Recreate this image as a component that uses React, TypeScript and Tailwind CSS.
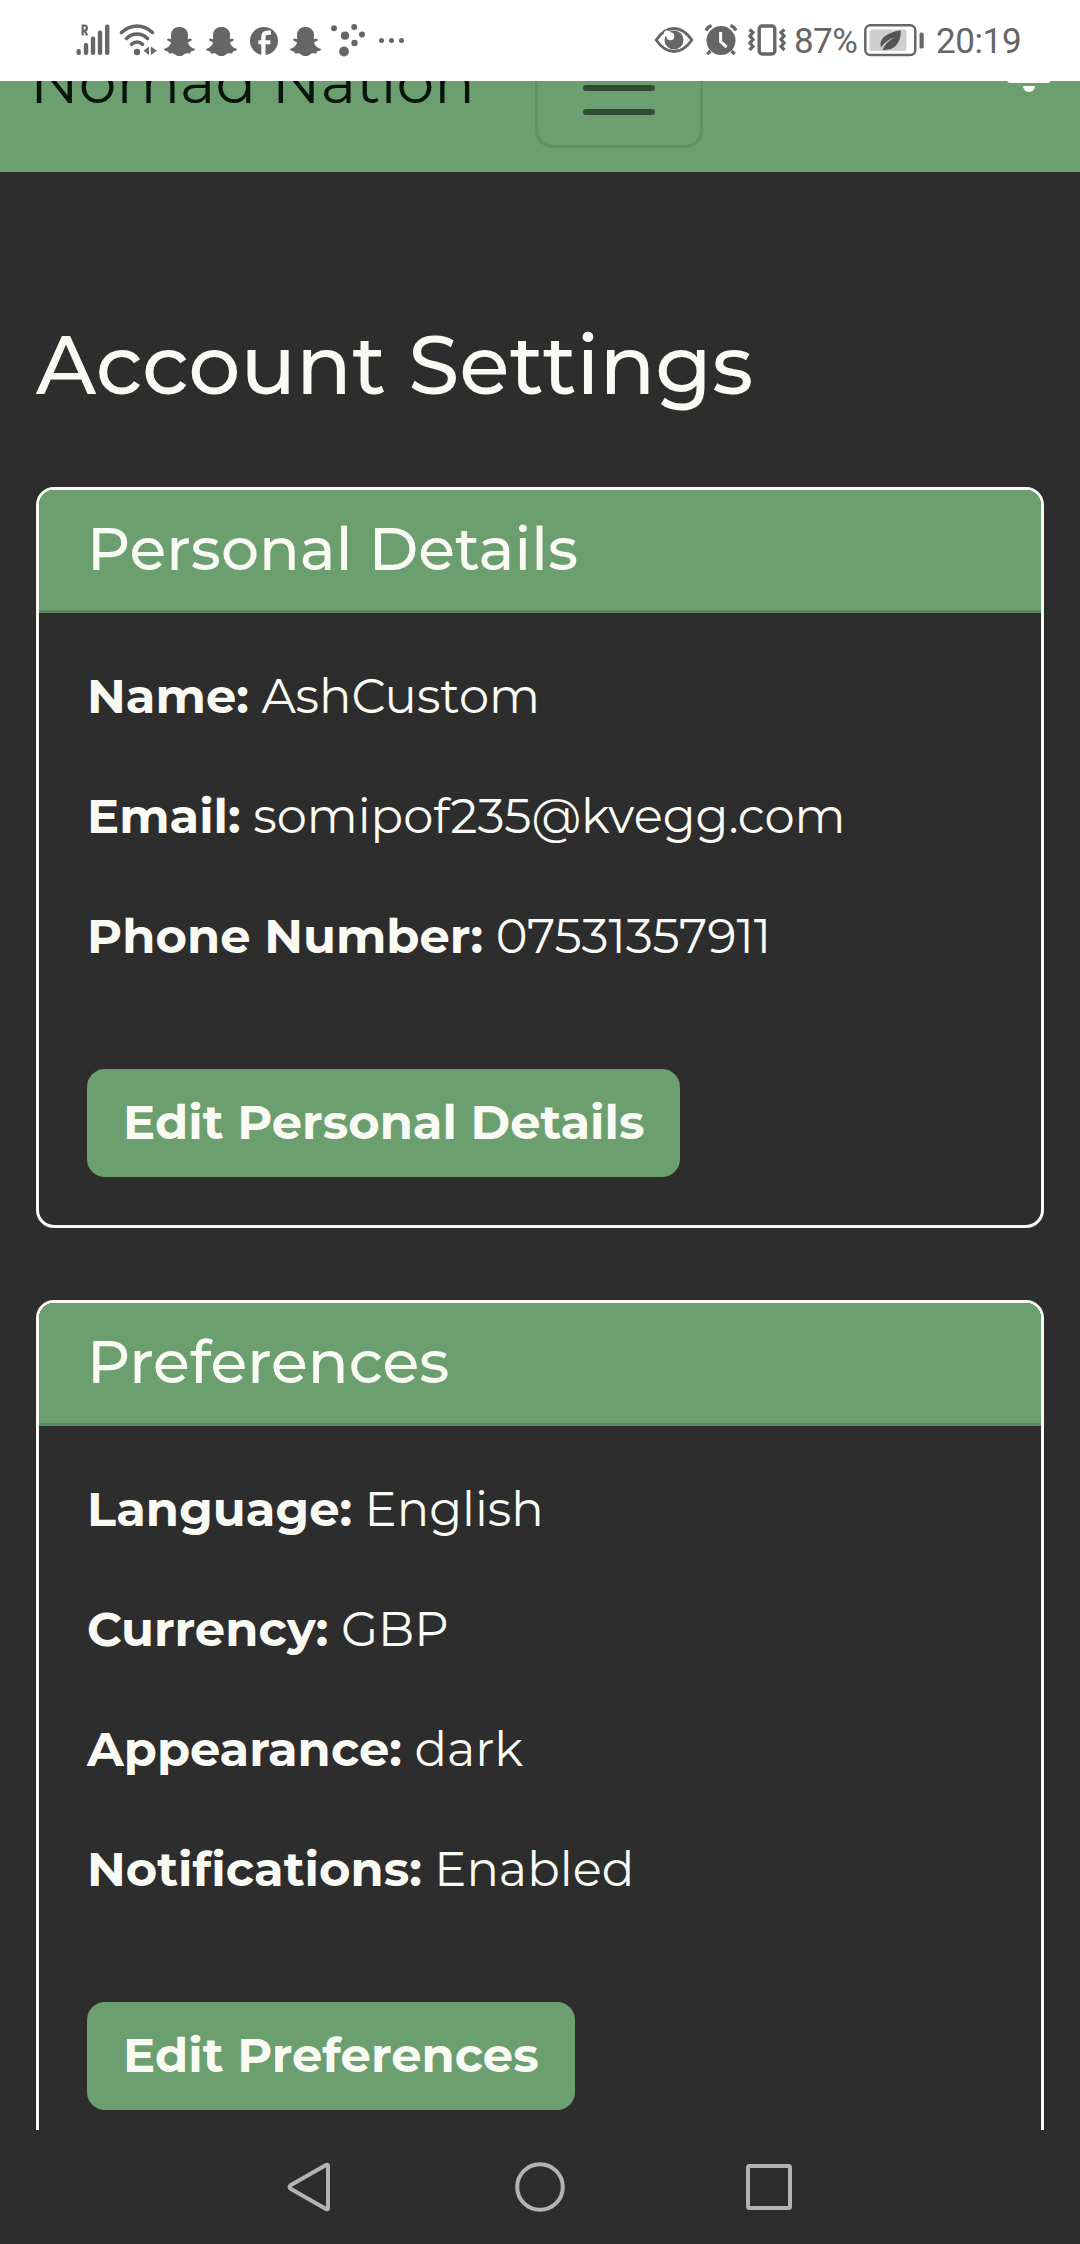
import type { ReactNode } from "react";
import { FaSnapchatGhost } from "react-icons/fa";

const GREY = "#666666";

function SignalIcon() {
  return (
    <svg className="h-[34px] w-[36px] shrink-0" viewBox="0 0 36 34" fill={GREY}>
      <rect x="0.5" y="26" width="4.4" height="6" rx="2" />
      <rect x="7.8" y="20" width="4.4" height="12" rx="2" />
      <rect x="14.8" y="13.5" width="4.4" height="18.5" rx="2" />
      <rect x="21.8" y="7.5" width="4.4" height="24.5" rx="2" />
      <rect x="29" y="1.5" width="4.4" height="30.5" rx="2" />
      <path d="M6.700 12.500V2.500h2q2.200 0 2.200 2.500t-2.200 2.500H6.800M8.600 7.500l2.500 5" fill="none" stroke={GREY} strokeWidth="2.200" />
    </svg>
  );
}

function WifiIcon() {
  return (
    <svg className="h-[34px] w-[40px] shrink-0" viewBox="0 0 40 34" fill="none" stroke={GREY} strokeWidth="3.6" strokeLinecap="round">
      <path d="M2.500 9.500Q9.500 3 18 3T33.500 9.500" />
      <path d="M7.500 15.500Q12 11 18 11T28.500 15.500" />
      <path d="M12.500 21.300Q15 19 18 19T23.500 21.300" />
      <circle cx="18" cy="29" r="3.2" fill={GREY} stroke="none" />
      <path d="M30 23.500v8.500l-5.500-4.300zM31.800 23.500v8.500l6.200-4.300z" fill={GREY} stroke="none" />
    </svg>
  );
}

function FacebookIcon() {
  return (
    <svg className="h-[28px] w-[28px] shrink-0" viewBox="0 0 28 28">
      <circle cx="14" cy="14" r="14" fill={GREY} />
      <path d="M13.400 28V10q0-4.300 4.600-4.300h3" fill="none" stroke="#fff" strokeWidth="4.200" />
      <path d="M8.300 15.300h12" stroke="#fff" strokeWidth="4" />
    </svg>
  );
}

function DotsIcon() {
  return (
    <svg className="h-[34px] w-[36px] shrink-0" viewBox="0 0 36 34" fill={GREY}>
      <circle cx="4" cy="5.200" r="3" />
      <circle cx="24.200" cy="4" r="3" />
      <circle cx="15" cy="12.700" r="4.100" />
      <circle cx="32" cy="11.500" r="3" />
      <circle cx="24.500" cy="20" r="3.200" />
      <circle cx="14" cy="28.500" r="4.900" />
    </svg>
  );
}

function EyeIcon() {
  return (
    <svg className="h-[30px] w-[40px] shrink-0" viewBox="0 0 40 30">
      <path d="M2.200 15Q10 3.500 20 3.500T37.800 15Q30 26.500 20 26.500T2.200 15Z" fill="none" stroke={GREY} strokeWidth="2.800" />
      <circle cx="20" cy="15" r="9.500" fill={GREY} />
      <circle cx="16.300" cy="11.200" r="4" fill="#fff" />
      <circle cx="13" cy="8.500" r="3" fill="#fff" />
    </svg>
  );
}

function AlarmIcon() {
  return (
    <svg className="h-[34px] w-[34px] shrink-0" viewBox="0 0 34 34" fill="none" stroke={GREY} strokeWidth="3.2">
      <circle cx="17" cy="17.500" r="14.500" fill={GREY} stroke="none" />
      <path d="M2 7.500q1.500-3.500 5.500-5M32 7.500q-1.500-3.500-5.500-5M6.500 28l-3.300 3.200M27.500 28l3.300 3.200" />
      <path d="M16.600 9v9.500l6 5.700" stroke="#fff" strokeWidth="3" />
    </svg>
  );
}

function VibrateIcon() {
  return (
    <svg className="h-[34px] w-[38px] shrink-0" viewBox="0 0 38 34" fill="none" stroke={GREY}>
      <rect x="11.200" y="3" width="15.600" height="28" rx="3" strokeWidth="3.400" />
      <path d="M1.500 6.500l3.500 3-3 3.500 3 3.500-3 3.500 3 3.500-3.500 3.500M36.500 6.500l-3.500 3 3 3.500-3 3.500 3 3.500-3 3.500 3.500 3.500" strokeWidth="3.200" />
    </svg>
  );
}

function BatteryIcon() {
  return (
    <svg className="h-[34px] w-[60px] shrink-0" viewBox="0 0 60 34">
      <rect x="1.300" y="2.300" width="50" height="29.800" rx="5" fill="none" stroke={GREY} strokeWidth="2.500" />
      <rect x="5.500" y="6.500" width="37" height="21.500" rx="2" fill="#cfcfcf" />
      <path d="M36.800 7.300Q26 9 20.500 13.500T17 24.500Q22 17 30.500 14.500 22 18.500 18.500 26.800 28 27.500 32.500 22T36.800 7.300Z" fill="#555" />
      <rect x="55.500" y="9.500" width="4.200" height="16" rx="1.500" fill={GREY} />
    </svg>
  );
}

function StatusBar() {
  return (
    <header className="flex h-[81px] shrink-0 items-start bg-white pt-[23px] font-['Roboto',sans-serif] text-[#666666]">
      <div className="ml-[76px] flex h-[34px] items-center">
        <SignalIcon />
        <div className="ml-[7px] flex"><WifiIcon /></div>
        <FaSnapchatGhost className="mt-[2px] ml-[5px] size-[31px]" />
        <FaSnapchatGhost className="mt-[2px] ml-[11px] size-[31px]" />
        <div className="mt-[2px] ml-[13px] flex"><FacebookIcon /></div>
        <FaSnapchatGhost className="mt-[2px] ml-[12px] size-[31px]" />
        <div className="ml-[9px] flex"><DotsIcon /></div>
        <div className="ml-[13px] flex gap-[5px]">
          <i className="size-[5px] rounded-full bg-[#666666]" />
          <i className="size-[5px] rounded-full bg-[#666666]" />
          <i className="size-[5px] rounded-full bg-[#666666]" />
        </div>
      </div>
      <div className="mr-[59px] ml-auto flex h-[34px] items-center">
        <EyeIcon />
        <div className="ml-[10px] flex"><AlarmIcon /></div>
        <div className="ml-[10px] flex"><VibrateIcon /></div>
        <span className="mt-[4px] ml-[8px] w-[70px] text-[35px] leading-[34px] tracking-[-0.6px]">87%</span>
        <BatteryIcon />
        <span className="mt-[4px] ml-[12px] w-[85px] text-[35px] leading-[34px] tracking-[-0.4px]">20:19</span>
      </div>
    </header>
  );
}

function NavBar() {
  return (
    <nav className="flex h-[91px] shrink-0 items-end overflow-hidden bg-[#6b9f6f]">
      <span className="mb-[45px] ml-[30px] w-[505px] text-[60px] leading-[90px] font-normal whitespace-nowrap text-[#06140a]">
        Nomad Nation
      </span>
      <button className="mb-[24px] flex h-[120px] w-[168px] shrink-0 items-center justify-center rounded-[18px] border-[3px] border-[#609065]">
        <svg className="size-[90px]" viewBox="0 0 30 30" stroke="#304a33" strokeWidth="2" strokeLinecap="round">
          <path d="M4 7h22M4 15h22M4 23h22" />
        </svg>
      </button>
      <svg className="mr-[29px] mb-[80px] ml-auto h-[48px] w-[44px] shrink-0" viewBox="0 0 44 48" fill="#fafaf5">
        <path d="M22 0a3 3 0 0 1 3 3v2q12 2.500 12 15 0 10 6 14.500 2 4.500-2 4.500H3q-4 0-2-4.500Q7 30 7 20 7 7.500 19 5V3a3 3 0 0 1 3-3Z" />
        <path d="M16 42h12a6 6 0 0 1-12 0Z" />
      </svg>
    </nav>
  );
}

type Row = { label: string; value: string };

function Card({ title, rows, action }: { title: string; rows: Row[]; action: ReactNode }) {
  return (
    <section className="mb-[72px] shrink-0 overflow-hidden rounded-[18px] border-[3px] border-[#fafaf5]">
      <h2 className="border-b-[3px] border-[#5a865f] bg-[#6b9f6f] px-[48px] pt-[23px] pb-[25px] text-[60px] leading-[72px] font-medium">
        {title}
      </h2>
      <div className="flex flex-col items-start px-[48px] pt-[47px] pb-[48px]">
        {rows.map((row) => (
          <p key={row.label} className="mb-[48px] text-[48px] leading-[72px] whitespace-nowrap">
            <strong className="font-bold">{row.label}</strong> {row.value}
          </p>
        ))}
        <button className="mt-[49px] h-[108px] rounded-[18px] bg-[#6b9f6f] px-[36px] pb-[2px] text-[48px] leading-[72px] font-bold whitespace-nowrap">
          {action}
        </button>
      </div>
    </section>
  );
}

function SystemNav() {
  return (
    <footer className="flex h-[114px] shrink-0 items-center justify-center gap-[180px]">
      <svg className="size-[50px]" viewBox="0 0 50 50" fill="none" stroke="#b3b3b3" strokeWidth="4" strokeLinejoin="round">
        <path d="M43 4v42q0 2-2 1L6 27q-3-2 0-4L41 3q2-1 2 1z" />
      </svg>
      <svg className="size-[50px]" viewBox="0 0 50 50" fill="none" stroke="#b3b3b3" strokeWidth="4">
        <circle cx="25" cy="25" r="22.800" />
      </svg>
      <svg className="size-[50px]" viewBox="0 0 50 50" fill="none" stroke="#b3b3b3" strokeWidth="4">
        <rect x="3" y="4" width="42" height="42" rx="1.500" />
      </svg>
    </footer>
  );
}

export default function App() {
  return (
    <div className="flex h-[2244px] w-[1080px] flex-col overflow-hidden bg-[#2d2d2d] font-['Montserrat','Inter',sans-serif] text-[#fafaf5]">
      <StatusBar />
      <NavBar />
      <main className="flex min-h-0 flex-1 flex-col overflow-hidden px-[36px] pt-[143px]">
        <h1 className="mb-[72px] shrink-0 text-[82.2px] leading-[100px] font-medium whitespace-nowrap">Account Settings</h1>
        <Card
          title="Personal Details"
          rows={[
            { label: "Name:", value: "AshCustom" },
            { label: "Email:", value: "somipof235@kvegg.com" },
            { label: "Phone Number:", value: "07531357911" },
          ]}
          action="Edit Personal Details"
        />
        <Card
          title="Preferences"
          rows={[
            { label: "Language:", value: "English" },
            { label: "Currency:", value: "GBP" },
            { label: "Appearance:", value: "dark" },
            { label: "Notifications:", value: "Enabled" },
          ]}
          action="Edit Preferences"
        />
      </main>
      <SystemNav />
    </div>
  );
}
